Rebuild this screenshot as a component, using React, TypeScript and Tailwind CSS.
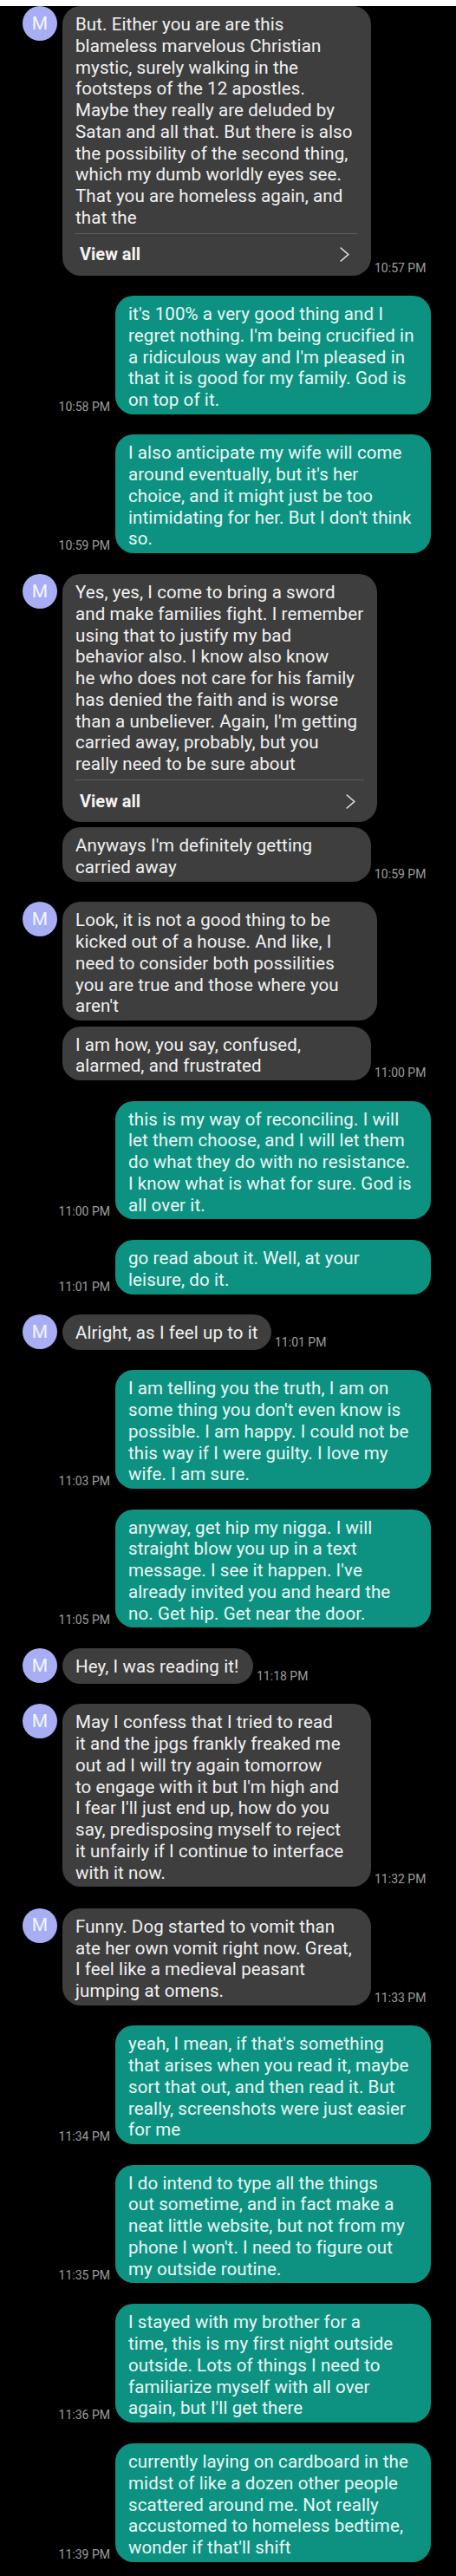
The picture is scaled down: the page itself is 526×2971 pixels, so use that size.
import React from "react";

type Msg = {
  side: "in" | "out";
  lines: string[];
  time?: string;
  avatar?: boolean;
  viewAll?: boolean;
  w?: string;
  mt: string;
};

const msgs: Msg[] = [
  {
    side: "in",
    avatar: true,
    viewAll: true,
    w: "w-[356px]",
    mt: "mt-[7px]",
    time: "10:57 PM",
    lines: [
      "But. Either you are are this",
      "blameless marvelous Christian",
      "mystic, surely walking in the",
      "footsteps of the 12 apostles.",
      "Maybe they really are deluded by",
      "Satan and all that. But there is also",
      "the possibility of the second thing,",
      "which my dumb worldly eyes see.",
      "That you are homeless again, and",
      "that the",
    ],
  },
  {
    side: "out",
    mt: "mt-[23.5px]",
    time: "10:58 PM",
    lines: [
      "it's 100% a very good thing and I",
      "regret nothing. I'm being crucified in",
      "a ridiculous way and I'm pleased in",
      "that it is good for my family. God is",
      "on top of it.",
    ],
  },
  {
    side: "out",
    mt: "mt-[23.5px]",
    time: "10:59 PM",
    lines: [
      "I also anticipate my wife will come",
      "around eventually, but it's her",
      "choice, and it might just be too",
      "intimidating for her. But I don't think",
      "so.",
    ],
  },
  {
    side: "in",
    avatar: true,
    viewAll: true,
    w: "w-[363px]",
    mt: "mt-[24px]",
    lines: [
      "Yes, yes, I come to bring a sword",
      "and make families fight. I remember",
      "using that to justify my bad",
      "behavior also. I know also know",
      "he who does not care for his family",
      "has denied the faith and is worse",
      "than a unbeliever. Again, I'm getting",
      "carried away, probably, but you",
      "really need to be sure about",
    ],
  },
  {
    side: "in",
    w: "w-[356px]",
    mt: "mt-[6.5px]",
    time: "10:59 PM",
    lines: ["Anyways I'm definitely getting", "carried away"],
  },
  {
    side: "in",
    avatar: true,
    w: "w-[363px]",
    mt: "mt-[23.5px]",
    lines: [
      "Look, it is not a good thing to be",
      "kicked out of a house. And like, I",
      "need to consider both possilities",
      "you are true and those where you",
      "aren't",
    ],
  },
  {
    side: "in",
    w: "w-[356px]",
    mt: "mt-[6.5px]",
    time: "11:00 PM",
    lines: ["I am how, you say, confused,", "alarmed, and frustrated"],
  },
  {
    side: "out",
    mt: "mt-[23.5px]",
    time: "11:00 PM",
    lines: [
      "this is my way of reconciling. I will",
      "let them choose, and I will let them",
      "do what they do with no resistance.",
      "I know what is what for sure. God is",
      "all over it.",
    ],
  },
  {
    side: "out",
    mt: "mt-[24px]",
    time: "11:01 PM",
    lines: ["go read about it. Well, at your", "leisure, do it."],
  },
  {
    side: "in",
    avatar: true,
    w: "w-[241px]",
    mt: "mt-[23.5px]",
    time: "11:01 PM",
    lines: ["Alright, as I feel up to it"],
  },
  {
    side: "out",
    mt: "mt-[23.5px]",
    time: "11:03 PM",
    lines: [
      "I am telling you the truth, I am on",
      "some thing you don't even know is",
      "possible. I am happy. I could not be",
      "this way if I were guilty. I love my",
      "wife. I am sure.",
    ],
  },
  {
    side: "out",
    mt: "mt-[23.5px]",
    time: "11:05 PM",
    lines: [
      "anyway, get hip my nigga. I will",
      "straight blow you up in a text",
      "message. I see it happen. I've",
      "already invited you and heard the",
      "no. Get hip. Get near the door.",
    ],
  },
  {
    side: "in",
    avatar: true,
    w: "w-[220px]",
    mt: "mt-[24px]",
    time: "11:18 PM",
    lines: ["Hey, I was reading it!"],
  },
  {
    side: "in",
    avatar: true,
    w: "w-[356px]",
    mt: "mt-[23.5px]",
    time: "11:32 PM",
    lines: [
      "May I confess that I tried to read",
      "it and the jpgs frankly freaked me",
      "out ad I will try again tomorrow",
      "to engage with it but I'm high and",
      "I fear I'll just end up, how do you",
      "say, predisposing myself to reject",
      "it unfairly if I continue to interface",
      "with it now.",
    ],
  },
  {
    side: "in",
    avatar: true,
    w: "w-[356px]",
    mt: "mt-[24.5px]",
    time: "11:33 PM",
    lines: [
      "Funny. Dog started to vomit than",
      "ate her own vomit right now. Great,",
      "I feel like a medieval peasant",
      "jumping at omens.",
    ],
  },
  {
    side: "out",
    mt: "mt-[23.5px]",
    time: "11:34 PM",
    lines: [
      "yeah, I mean, if that's something",
      "that arises when you read it, maybe",
      "sort that out, and then read it. But",
      "really, screenshots were just easier",
      "for me",
    ],
  },
  {
    side: "out",
    mt: "mt-[23.5px]",
    time: "11:35 PM",
    lines: [
      "I do intend to type all the things",
      "out sometime, and in fact make a",
      "neat little website, but not from my",
      "phone I won't. I need to figure out",
      "my outside routine.",
    ],
  },
  {
    side: "out",
    mt: "mt-[24px]",
    time: "11:36 PM",
    lines: [
      "I stayed with my brother for a",
      "time, this is my first night outside",
      "outside. Lots of things I need to",
      "familiarize myself with all over",
      "again, but I'll get there",
    ],
  },
  {
    side: "out",
    mt: "mt-[24px]",
    time: "11:39 PM",
    lines: [
      "currently laying on cardboard in the",
      "midst of like a dozen other people",
      "scattered around me. Not really",
      "accustomed to homeless bedtime,",
      "wonder if that'll shift",
    ],
  },
];

function Chevron() {
  return (
    <svg width="11" height="17" viewBox="0 0 11 17" fill="none">
      <polyline
        points="1.2,1 9.8,8.5 1.2,16"
        stroke="#e6e6e6"
        strokeWidth="1.6"
        strokeLinecap="round"
        strokeLinejoin="round"
      />
    </svg>
  );
}

function Lines({ lines }: { lines: string[] }) {
  return (
    <>
      {lines.map((l, i) => (
        <div key={i} className="whitespace-nowrap">
          {l}
        </div>
      ))}
    </>
  );
}

function Time({ t, cls }: { t: string; cls: string }) {
  return (
    <div
      className={`${cls} mb-[1px] shrink-0 whitespace-nowrap text-[14px] leading-[16px] tracking-normal text-[#9d9d9d]`}
    >
      {t}
    </div>
  );
}

function Incoming({ m }: { m: Msg }) {
  return (
    <div className={`flex items-end pl-[26px] ${m.mt}`}>
      {m.avatar ? (
        <div className="flex h-[40px] w-[40px] shrink-0 items-center justify-center self-start rounded-full bg-[#a8aef4] text-[21px] leading-none text-[#f4f5ff]">
          M
        </div>
      ) : (
        <div className="w-[40px] shrink-0" />
      )}
      <div
        className={`ml-[6px] ${m.w} shrink-0 rounded-[21px] bg-[#3e3e3e] text-[20.5px] leading-[24.75px] tracking-[0.1px] text-[#f1f1f1]`}
      >
        <div
          className={`min-h-[40.5px] pl-[15px] pr-[8px] pt-[9px] ${
            m.viewAll ? "pb-[5.5px]" : "pb-[4px]"
          }`}
        >
          <Lines lines={m.lines} />
        </div>
        {m.viewAll && (
          <>
            <div className="ml-[14px] mr-[15px] h-px bg-[#5c5c5c]" />
            <div className="flex h-[47.5px] items-center justify-between pl-[20px] pr-[25px]">
              <span className="text-[20px] font-bold tracking-normal text-[#f3f3f3]">
                View all
              </span>
              <Chevron />
            </div>
          </>
        )}
      </div>
      {m.time && <Time t={m.time} cls="ml-[4px]" />}
    </div>
  );
}

function Outgoing({ m }: { m: Msg }) {
  return (
    <div className={`flex items-end justify-end pr-[29px] ${m.mt}`}>
      {m.time && <Time t={m.time} cls="mr-[6px]" />}
      <div className="w-[364px] shrink-0 rounded-[21px] bg-[#0d9282] pb-[4px] pl-[15px] pr-[8px] pt-[9px] text-[20.5px] leading-[24.75px] tracking-[0.1px] text-[#eaf7f5]">
        <Lines lines={m.lines} />
      </div>
    </div>
  );
}

export default function App() {
  return (
    <div className="min-h-screen w-[526px] bg-black pb-[16px] font-['Roboto',sans-serif]">
      {msgs.map((m, i) =>
        m.side === "in" ? <Incoming key={i} m={m} /> : <Outgoing key={i} m={m} />
      )}
    </div>
  );
}
